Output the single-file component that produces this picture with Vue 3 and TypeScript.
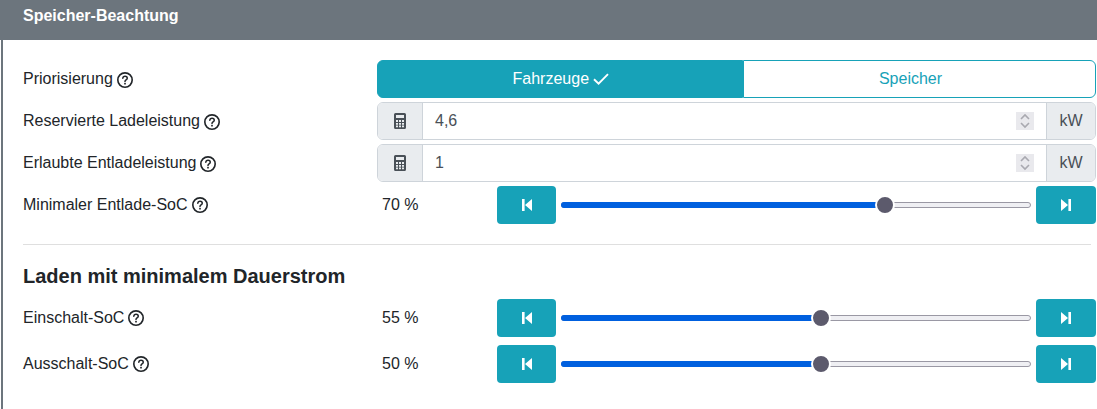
<script setup lang="ts">
interface SliderRow { label: string; value: number; pos: number }
const topSlider: SliderRow = { label: 'Minimaler Entlade-SoC', value: 70, pos: 68.94 }
const sliders: SliderRow[] = [
  { label: 'Einschalt-SoC', value: 55, pos: 55.32 },
  { label: 'Ausschalt-SoC', value: 50, pos: 55.32 },
]
const inputs = [
  { label: 'Reservierte Ladeleistung', value: '4,6' },
  { label: 'Erlaubte Entladeleistung', value: '1' },
]
</script>

<template>
  <div class="card">
    <header class="card-head">Speicher-Beachtung</header>
    <div class="card-body">
      <div class="row low-help">
        <div class="label"><span>Priorisierung</span>
          <svg class="help" viewBox="0 0 512 512"><circle cx="256" cy="256" r="230" fill="none" stroke="currentColor" stroke-width="52"/><path d="M186 200c4-40 36-64 72-64 40 0 70 26 70 60 0 28-16 42-38 56-22 14-34 24-34 48" fill="none" stroke="currentColor" stroke-width="48" stroke-linecap="round"/><circle cx="256" cy="372" r="30" fill="currentColor"/></svg>
        </div>
        <div class="toggle">
          <button class="tg on">Fahrzeuge <svg class="check" viewBox="0 0 16 12"><path d="M1 6.200l4.600 4.400L15 1.200" fill="none" stroke="currentColor" stroke-width="1.9"/></svg></button>
          <button class="tg off">Speicher</button>
        </div>
      </div>

      <div v-for="i in inputs" :key="i.label" class="row low-help">
        <div class="label"><span>{{ i.label }}</span>
          <svg class="help" viewBox="0 0 512 512"><circle cx="256" cy="256" r="230" fill="none" stroke="currentColor" stroke-width="52"/><path d="M186 200c4-40 36-64 72-64 40 0 70 26 70 60 0 28-16 42-38 56-22 14-34 24-34 48" fill="none" stroke="currentColor" stroke-width="48" stroke-linecap="round"/><circle cx="256" cy="372" r="30" fill="currentColor"/></svg>
        </div>
        <div class="group">
          <span class="addon left">
            <svg class="calc" viewBox="0 0 12 16"><path fill="currentColor" fill-rule="evenodd" d="M1.500 0h9A1.500 1.500 0 0 1 12 1.500v13a1.500 1.500 0 0 1-1.500 1.500h-9A1.500 1.500 0 0 1 0 14.500v-13A1.500 1.500 0 0 1 1.500 0zM2 2v3h8V2zM2 7v2h2V7zm3 0v2h2V7zm3 0v2h2V7zM2 10v1.800h2V10zm3 0v1.800h2V10zm3 0v1.800h2V10zM2 12.600v1.600h2v-1.600zm3 0v1.600h2v-1.600zm3 0v1.600h2v-1.600z"/></svg>
          </span>
          <div class="field">
            <span class="val">{{ i.value }}</span>
            <span class="spin"><svg viewBox="0 0 18 18"><path d="M5 7l4-4 4 4M5 11l4 4 4-4" fill="none" stroke="#a9a9b0" stroke-width="1.600"/></svg></span>
          </div>
          <span class="addon right">kW</span>
        </div>
      </div>

      <div class="row">
        <div class="label"><span>{{ topSlider.label }}</span>
          <svg class="help" viewBox="0 0 512 512"><circle cx="256" cy="256" r="230" fill="none" stroke="currentColor" stroke-width="52"/><path d="M186 200c4-40 36-64 72-64 40 0 70 26 70 60 0 28-16 42-38 56-22 14-34 24-34 48" fill="none" stroke="currentColor" stroke-width="48" stroke-linecap="round"/><circle cx="256" cy="372" r="30" fill="currentColor"/></svg>
        </div>
        <div class="slider-wrap">
          <span class="pct">{{ topSlider.value }} %</span>
          <button class="step"><svg viewBox="0 0 12 14"><path fill="currentColor" d="M1 1h2.600v12H1zM11 1v12L4 7z"/></svg></button>
          <div class="track"><div class="fill" :style="{ width: topSlider.pos + '%' }"></div><div class="thumb" :style="{ left: topSlider.pos + '%' }"></div></div>
          <button class="step end"><svg viewBox="0 0 12 14"><path fill="currentColor" d="M11 1H8.400v12H11zM1 1v12l7-6z"/></svg></button>
        </div>
      </div>

      <hr class="divider" />
      <h3 class="sub">Laden mit minimalem Dauerstrom</h3>

      <div class="stack">
        <div v-for="s in sliders" :key="s.label" class="row">
          <div class="label"><span>{{ s.label }}</span>
            <svg class="help" viewBox="0 0 512 512"><circle cx="256" cy="256" r="230" fill="none" stroke="currentColor" stroke-width="52"/><path d="M186 200c4-40 36-64 72-64 40 0 70 26 70 60 0 28-16 42-38 56-22 14-34 24-34 48" fill="none" stroke="currentColor" stroke-width="48" stroke-linecap="round"/><circle cx="256" cy="372" r="30" fill="currentColor"/></svg>
          </div>
          <div class="slider-wrap">
            <span class="pct">{{ s.value }} %</span>
            <button class="step"><svg viewBox="0 0 12 14"><path fill="currentColor" d="M1 1h2.600v12H1zM11 1v12L4 7z"/></svg></button>
            <div class="track"><div class="fill" :style="{ width: s.pos + '%' }"></div><div class="thumb" :style="{ left: s.pos + '%' }"></div></div>
            <button class="step end"><svg viewBox="0 0 12 14"><path fill="currentColor" d="M11 1H8.400v12H11zM1 1v12l7-6z"/></svg></button>
          </div>
        </div>
      </div>
    </div>
  </div>
</template>

<style>
html, body { margin: 0; background: #fff; overflow: hidden; }
</style>

<style scoped>
.card {
  width: 1096px;
  height: 409px;
  box-sizing: border-box;
  margin-left: 1px;
  border-left: 2px solid #6c757d;
  font-family: "Liberation Sans", Arial, sans-serif;
  font-size: 16px;
  color: #212529;
}
.card-head {
  height: 40px;
  box-sizing: border-box;
  margin-left: -3px;
  padding: 6px 0 0 23px;
  background: #6c757d;
  color: #fff;
  font-size: 16px;
  font-weight: 700;
  line-height: 20px;
}
.card-body { padding: 20px 0 0 20px; width: 1093px; box-sizing: border-box; }
.row { display: flex; align-items: center; height: 38px; margin-bottom: 4px; }
.label { width: 354px; flex: none; display: flex; align-items: center; gap: 4px; line-height: 20px; }
.help { width: 16px; height: 16px; color: #212529; flex: none; }
.low-help .help { margin-top: 2px; }
.toggle { display: flex; width: 719px; height: 38px; }
.tg {
  flex: 1;
  font: inherit;
  box-sizing: border-box;
  padding: 0;
  border: 1px solid #17a2b8;
}
.tg.on { flex: 0 0 366px; padding-left: 2px; background: #17a2b8; color: #fff; border-radius: 6px 0 0 6px; }
.tg.off { padding-right: 18px; background: #fff; color: #17a2b8; border-radius: 0 6px 6px 0; }
.check { width: 16px; height: 12px; vertical-align: -1px; }
.group { display: flex; width: 719px; height: 38px; box-sizing: border-box; border: 1px solid #ced4da; border-radius: 6px; overflow: hidden; }
.addon { background: #e9ecef; display: flex; align-items: center; justify-content: center; color: #495057; flex: none; }
.addon.left { width: 45px; box-sizing: border-box; border-right: 1px solid #ced4da; }
.addon.right { width: 49px; box-sizing: border-box; border-left: 1px solid #ced4da; }
.calc { width: 12px; height: 16px; color: #495057; }
.field { flex: 1; display: flex; align-items: center; justify-content: space-between; padding: 0 12px 0 12px; color: #495057; }
.spin { width: 18px; height: 18px; background: #e9e9ed; display: flex; }
.spin svg { width: 18px; height: 18px; }
.slider-wrap { display: flex; align-items: center; width: 719px; }
.pct { width: 120px; padding-left: 5px; box-sizing: border-box; flex: none; }
.step {
  width: 59px;
  height: 38px;
  flex: none;
  padding: 0;
  border: 0;
  background: #17a2b8;
  color: #fff;
  border-radius: 4px;
  display: flex;
  align-items: center;
  justify-content: center;
}
.step.end { width: 60px; }
.step svg { width: 12px; height: 14px; }
.track {
  position: relative;
  flex: 1;
  height: 6px;
  margin: 0 5px;
  box-sizing: border-box;
  background: #efeff3;
  border: 1px solid #9a98a4;
  border-radius: 3px;
}
.fill { position: absolute; left: -1px; top: -1px; height: 6px; background: #0060df; border-radius: 3px; }
.thumb {
  position: absolute;
  top: 50%;
  width: 20px;
  height: 20px;
  margin: -10px 0 0 -10px;
  border-radius: 50%;
  background: #5c5a6c;
  border: 2px solid #fff;
  box-sizing: border-box;
}
.divider { margin: 20px 0 0; border: 0; border-top: 1px solid #dfdfdf; width: 1068px; height: 0; }
.sub { margin: 20px 0 12px; font-size: 20px; line-height: 22px; font-weight: 700; color: #212529; }
.stack { display: flex; flex-direction: column; gap: 4px; }
</style>
